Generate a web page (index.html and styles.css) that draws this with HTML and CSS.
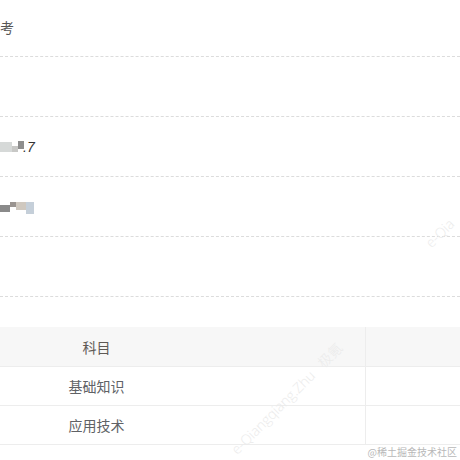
FILE: index.html
```html
<!DOCTYPE html>
<html lang="zh">
<head>
<meta charset="utf-8">
<link rel="stylesheet" href="styles.css">
</head>
<body>
<div class="page">
  <div class="form">
    <div class="row row-first"><span class="val">考</span></div>
    <div class="row"></div>
    <div class="row"><span class="mosaic m1"><i class="b b1"></i><i class="b b2"></i><i class="b b3"></i></span><span class="val tail">.7</span></div>
    <div class="row"><span class="mosaic m2"><i class="b b4"></i><i class="b b5"></i><i class="b b6"></i><i class="b b7"></i></span></div>
    <div class="row"></div>
  </div>
  <table class="grid">
    <thead>
      <tr><th class="c1">科目</th><th class="c2"></th></tr>
    </thead>
    <tbody>
      <tr><td class="c1">基础知识</td><td class="c2"></td></tr>
      <tr><td class="c1">应用技术</td><td class="c2"></td></tr>
    </tbody>
  </table>
  <div class="wm wm1">e-Qiangqiang.Zhu&nbsp;&nbsp;&nbsp;极氪</div>
  <div class="wm wm2">e-Qia</div>
  <div class="credit">@稀土掘金技术社区</div>
</div>
</body>
</html>
```
FILE: styles.css
```css
html, body {
  margin: 0;
  padding: 0;
  background: #fff;
}
body {
  width: 460px;
  height: 460px;
  overflow: hidden;
  font-family: "Noto Sans CJK SC", "Noto Sans", sans-serif;
  color: #606266;
}
.page {
  position: relative;
  width: 460px;
  height: 460px;
  overflow: hidden;
}
.form {
  margin-top: -3px;
}
.row {
  height: 59px;
  border-bottom: 1px dashed #dcdcdc;
  display: flex;
  align-items: center;
  font-size: 14px;
}
.val {
  color: #555;
  line-height: 20px;
}
.tail {
  font-family: "Liberation Sans", sans-serif;
  font-style: italic;
  color: #333;
  margin-left: -1px;
}
.mosaic {
  display: flex;
  align-items: center;
}
.b {
  display: block;
  height: 6px;
}
.b1 { width: 12px; height: 10px; background: #d6d9d8; }
.b2 { width: 6px; height: 6px; background: #c8c8c6; margin-top: 4px; }
.b3 { width: 6px; height: 8px; background: #8e8e8e; margin-top: -3px; }
.m2 { height: 20px; }
.b4 { width: 10px; height: 7px; background: #8a8a8a; margin-top: 4px; }
.b5 { width: 6px; height: 5px; background: #9a9490; margin-top: -4px; }
.b6 { width: 10px; height: 8px; background: #cfc8bf; margin-top: -2px; }
.b7 { width: 8px; height: 12px; background: #c5cfd9; margin-top: 2px; }
.grid {
  margin-top: 30px;
  margin-left: -172px;
  border-collapse: collapse;
  table-layout: fixed;
  width: 700px;
  font-size: 14px;
}
.grid th, .grid td {
  height: 38px;
  padding: 0;
  text-align: center;
  font-weight: normal;
  color: #606266;
  border-bottom: 1px solid #ededed;
}
.grid th {
  background: #f7f7f7;
  height: 39px;
  color: #5f5a55;
}
.grid .c1 {
  width: 537px;
  border-right: 1px solid #ededed;
}
.wm {
  position: absolute;
  font-family: "Open Sans", "Noto Sans CJK SC", sans-serif;
  font-size: 14px;
  font-weight: 300;
  color: #ebebeb;
  white-space: nowrap;
  transform: rotate(-45deg);
  transform-origin: 0 0;
}
.wm1 { left: 226px; top: 444px; }
.wm2 { left: 421px; top: 238px; }
.credit {
  position: absolute;
  right: 3px;
  top: 444px;
  font-size: 10px;
  color: #b8b8b8;
  font-family: "Noto Sans CJK SC", sans-serif;
}
```
